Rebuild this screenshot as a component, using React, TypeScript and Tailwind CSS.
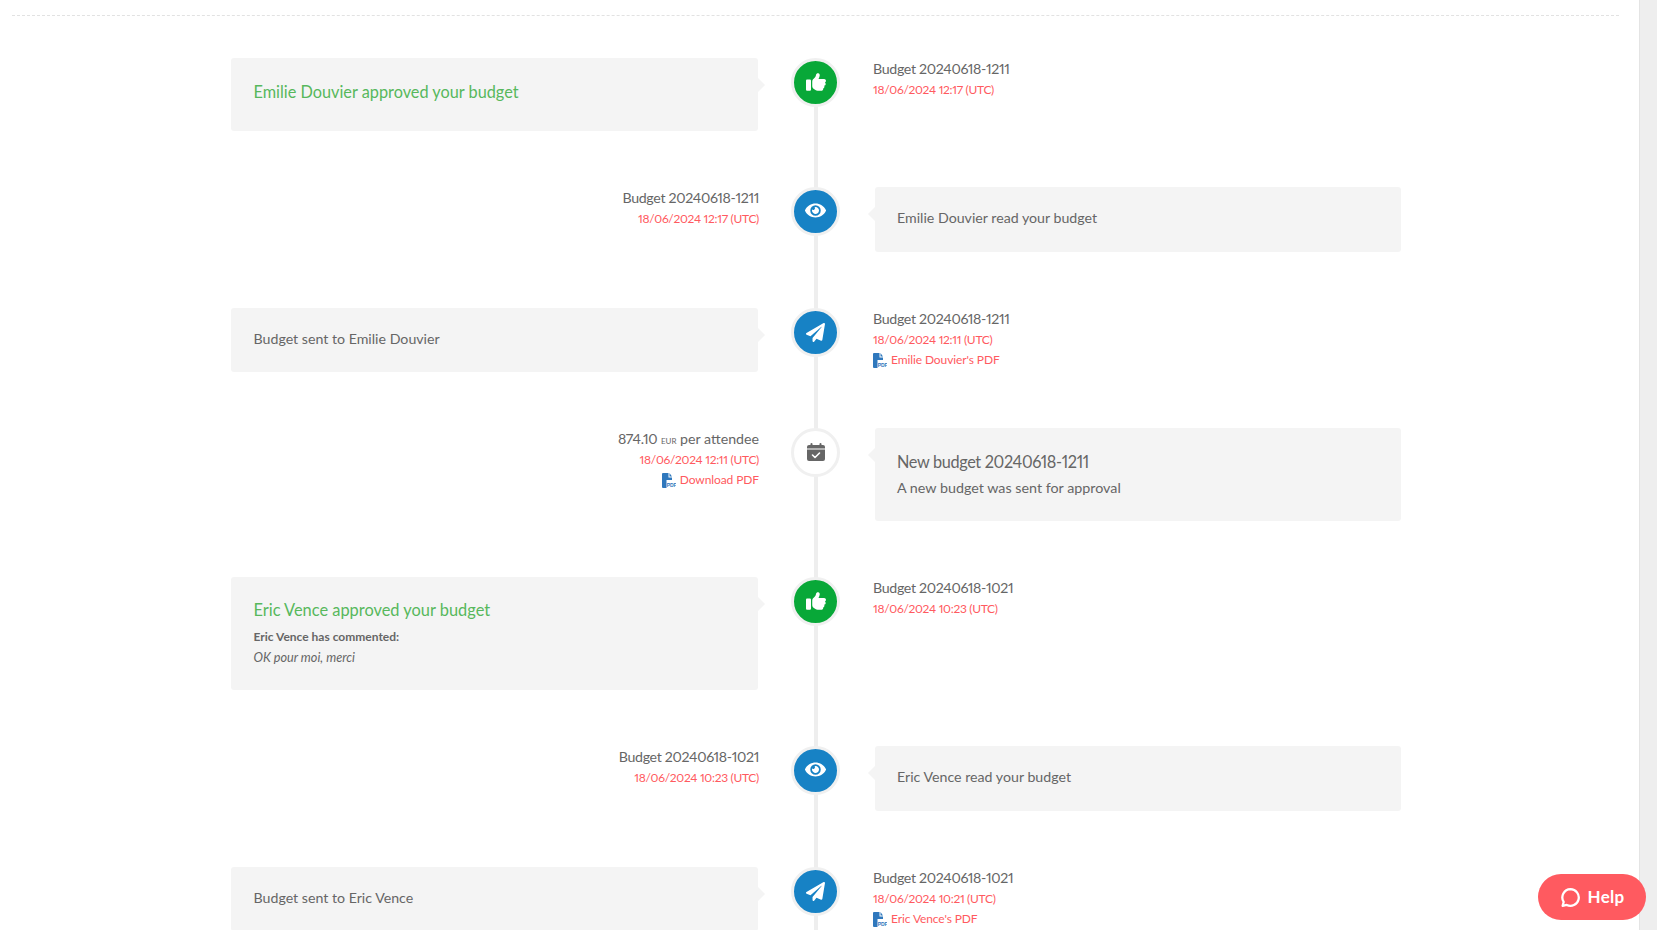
import { FaEye, FaPaperPlane } from "react-icons/fa";
import { FaThumbsUp } from "react-icons/fa6";

type Kind = "approved" | "read" | "sent" | "new";

function PdfIcon() {
    return (
        <svg viewBox="0 0 14 15" className="h-[15px] w-[14px] shrink-0">
            <path d="M0 1a1 1 0 0 1 1-1h5.5v4.5H10V7H4.5v8H1a1 1 0 0 1-1-1z" fill="#2f78bd" />
            <path d="M7.5 0L10 3.5H7.5z" fill="#2f78bd" />
            <text x="4.8" y="14" fontSize="5" fontWeight="700" fill="#2f78bd" fontFamily="Liberation Sans, sans-serif">
                PDF
            </text>
        </svg>
    );
}

function CalendarIcon() {
    return (
        <svg viewBox="0 0 18 18" className="-mt-px h-[18px] w-[18px]">
            <rect x="3.5" y="0" width="2" height="3" rx="1" fill="currentColor" />
            <rect x="12.5" y="0" width="2" height="3" rx="1" fill="currentColor" />
            <path d="M0 4a2 2 0 0 1 2-2h14a2 2 0 0 1 2 2v1.5H0z" fill="currentColor" />
            <path d="M0 6.5h18V16a2 2 0 0 1-2 2H2a2 2 0 0 1-2-2z" fill="currentColor" />
            <path d="M5.5 12l2.5 2.5 4.5-4.5" fill="none" stroke="#ffffff" strokeWidth="1.6" strokeLinecap="round" strokeLinejoin="round" />
        </svg>
    );
}

function Bubble({ icon }: { icon: Kind }) {
    const bg = icon === "approved" ? "bg-[#08a838] text-white" : icon === "new" ? "bg-white text-[#666666]" : "bg-[#1782c5] text-white";

    return (
        <div className={`relative z-10 mx-auto flex h-[49px] w-[49px] items-center justify-center rounded-full border-[3px] border-[#f0f0f0] ${bg}`}>
            {icon === "approved" && <FaThumbsUp className="-mt-px text-[20px]" />}
            {icon === "read" && <FaEye className="-mt-[2px] text-[21px]" />}
            {icon === "sent" && <FaPaperPlane className="text-[19px]" />}
            {icon === "new" && <CalendarIcon />}
        </div>
    );
}

function Card({ side, className, children }: { side: "left" | "right"; className: string; children: React.ReactNode }) {
    return (
        <div className={`relative rounded-[3px] bg-[#f4f4f4] pr-[22px] ${side === "left" ? "pl-[22.5px]" : "pl-[22px]"} ${className}`}>
            {side === "left" ? (
                <span className="absolute right-[-7px] top-[20px] h-0 w-0 border-y-[7px] border-l-[7px] border-y-transparent border-l-[#f4f4f4]" />
            ) : (
                <span className="absolute left-[-7px] top-[20px] h-0 w-0 border-y-[7px] border-r-[7px] border-y-transparent border-r-[#f4f4f4]" />
            )}
            {children}
        </div>
    );
}

function Meta({ title, date, pdf, align }: { title: React.ReactNode; date: string; pdf?: string; align: "left" | "right" }) {
    return (
        <div className={`pt-px text-[14.2px] leading-[20px] text-[#666666] proportional-nums ${align === "right" ? "-mr-px text-right" : "text-left"}`}>
            <div className="h-[21px] tracking-[-0.33px]">{title}</div>
            <div className="text-[12px] tracking-[-0.3px] text-[#ff5a60]">{date}</div>
            {pdf && (
                <div className={`flex items-center gap-[4px] text-[12px] tracking-[-0.1px] text-[#ff5a60] ${align === "right" ? "justify-end" : ""}`}>
                    <PdfIcon />
                    <span>{pdf}</span>
                </div>
            )}
        </div>
    );
}

function Row({ icon, left, right }: { icon: Kind; left: React.ReactNode; right: React.ReactNode }) {
    return (
        <div className="grid grid-cols-[527px_115px_528px]">
            <div>{left}</div>
            <div>
                <Bubble icon={icon} />
            </div>
            <div>{right}</div>
        </div>
    );
}

export default function App() {
    return (
        <div className="flex h-[930px] overflow-hidden bg-white font-['Lato',sans-serif]">
            <main className="relative w-[1640px] shrink-0 border-r border-[#e4e4e4]">
                <div className="ml-[12px] mr-[20px] mt-[15px] border-t border-dashed border-[#e2e2e2]" />

                <div className="relative ml-[231px] mt-[42px] flex w-[1170px] flex-col gap-[56px]">
                    <div className="absolute bottom-0 left-[583px] top-[20px] w-[4px] bg-[#eeeeee]" />

                    <Row
                        icon="approved"
                        left={
                            <Card side="left" className="h-[73px] pt-[22px]">
                                <div className="text-[16.3px] leading-[24px] text-[#57b85c]">Emilie Douvier approved your budget</div>
                            </Card>
                        }
                        right={<Meta align="left" title="Budget 20240618-1211" date="18/06/2024 12:17 (UTC)" />}
                    />

                    <Row
                        icon="read"
                        left={<Meta align="right" title="Budget 20240618-1211" date="18/06/2024 12:17 (UTC)" />}
                        right={
                            <Card side="right" className="ml-[2px] h-[65px] pt-[21px] text-[14.2px] leading-[20px] text-[#666666]">
                                Emilie Douvier read your budget
                            </Card>
                        }
                    />

                    <Row
                        icon="sent"
                        left={
                            <Card side="left" className="h-[64px] pt-[21px] text-[14.2px] leading-[20px] text-[#666666]">
                                Budget sent to Emilie Douvier
                            </Card>
                        }
                        right={<Meta align="left" title="Budget 20240618-1211" date="18/06/2024 12:11 (UTC)" pdf="Emilie Douvier's PDF" />}
                    />

                    <Row
                        icon="new"
                        left={
                            <Meta
                                align="right"
                                title={
                                    <span className="tracking-normal">
                                        <span className="tracking-[-0.33px]">874.10</span> <span className="text-[8px] leading-none">EUR</span> per attendee
                                    </span>
                                }
                                date="18/06/2024 12:11 (UTC)"
                                pdf="Download PDF"
                            />
                        }
                        right={
                            <Card side="right" className="ml-[2px] h-[93px] pt-[22px] text-[#666666] proportional-nums">
                                <div className="text-[16.3px] leading-[24px] tracking-[-0.35px]">New budget 20240618-1211</div>
                                <div className="mt-[2px] text-[14.3px] leading-[24px]">A new budget was sent for approval</div>
                            </Card>
                        }
                    />

                    <Row
                        icon="approved"
                        left={
                            <Card side="left" className="h-[113px] pt-[21px]">
                                <div className="text-[16.4px] leading-[24px] text-[#57b85c]">Eric Vence approved your budget</div>
                                <div className="mt-[5px] text-[12px] font-bold leading-[20px] text-[#666666]">Eric Vence has commented:</div>
                                <div className="text-[12.7px] italic leading-[20px] text-[#666666]">OK pour moi, merci</div>
                            </Card>
                        }
                        right={<Meta align="left" title="Budget 20240618-1021" date="18/06/2024 10:23 (UTC)" />}
                    />

                    <Row
                        icon="read"
                        left={<Meta align="right" title="Budget 20240618-1021" date="18/06/2024 10:23 (UTC)" />}
                        right={
                            <Card side="right" className="ml-[2px] h-[65px] pt-[21px] text-[14.2px] leading-[20px] text-[#666666]">
                                Eric Vence read your budget
                            </Card>
                        }
                    />

                    <Row
                        icon="sent"
                        left={
                            <Card side="left" className="h-[64px] pt-[21px] text-[14.2px] leading-[20px] text-[#666666]">
                                Budget sent to Eric Vence
                            </Card>
                        }
                        right={<Meta align="left" title="Budget 20240618-1021" date="18/06/2024 10:21 (UTC)" pdf="Eric Vence's PDF" />}
                    />
                </div>
            </main>

            <div className="flex-1 bg-[#eeeeee]" />

            <button className="fixed bottom-[10px] right-[11px] flex h-[46px] w-[108px] items-center justify-center gap-[7px] rounded-full bg-[#ff5a60] text-[17px] font-bold tracking-[0.3px] text-white">
                <svg viewBox="0 0 24 24" fill="none" stroke="currentColor" strokeWidth="2.6" strokeLinecap="round" strokeLinejoin="round" className="h-[21px] w-[21px]">
                    <path d="M12 2.5a9.5 9.5 0 1 1-4.3 18L3 21.5l1.2-4.4A9.5 9.5 0 0 1 12 2.5z" />
                </svg>
                Help
            </button>
        </div>
    );
}
